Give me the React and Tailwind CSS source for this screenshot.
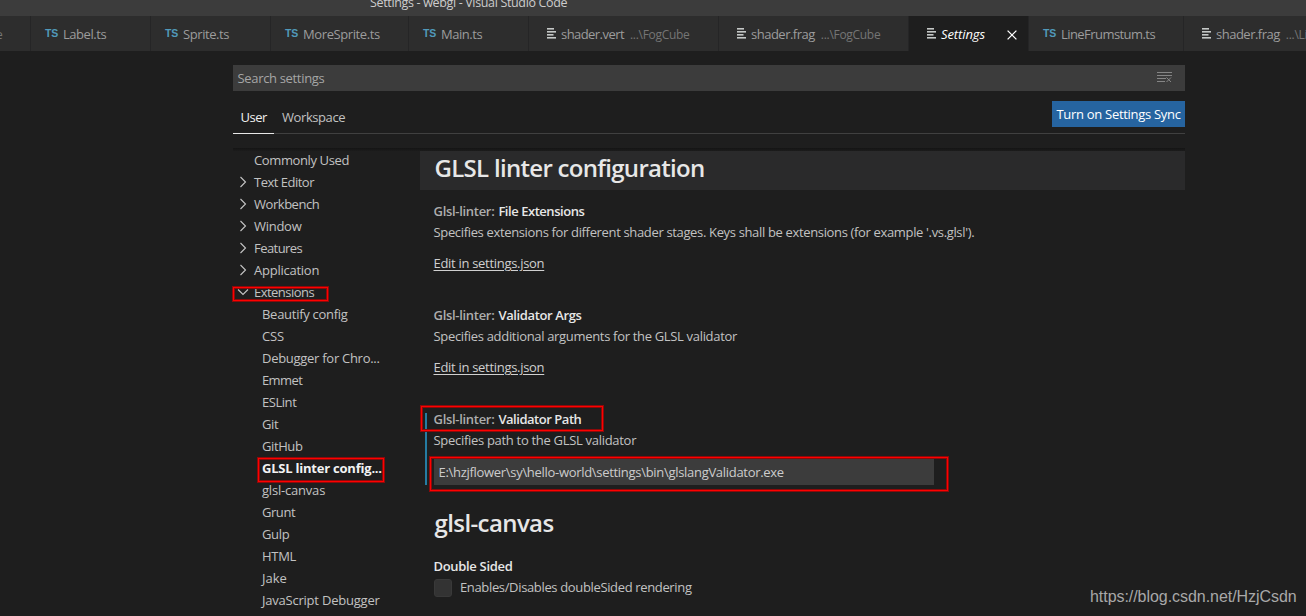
import React from 'react';

const FONT = "font-['Open_Sans','Noto_Sans',sans-serif]";

function FileIcon({ className = '' }) {
  return (
    <svg className={'shrink-0 ' + className} width="10" height="11" viewBox="0 0 10 11">
      <g fill="currentColor">
        <rect x="0" y="0" width="7" height="1.6" />
        <rect x="0" y="3" width="9" height="1.6" />
        <rect x="0" y="6" width="6.5" height="1.6" />
        <rect x="0" y="9" width="9" height="1.6" />
      </g>
    </svg>
  );
}

function TsTab({ name, width, track }) {
  return (
    <div className={'flex h-full shrink-0 items-center border-r border-[#252526] bg-[#2d2d2d] pt-[2px] pl-[14px] ' + width}>
      <span className="relative -top-px w-[18px] font-['Liberation_Sans',Arial,sans-serif] text-[10.5px] leading-none font-bold tracking-[-0.2px] text-[#519aba]">TS</span>
      <span className={'text-[#9c9c9c] ' + track}>{name}</span>
    </div>
  );
}

function FileTab({ name, path, width, track }) {
  return (
    <div className={'flex h-full shrink-0 items-center overflow-hidden border-r border-[#252526] bg-[#2d2d2d] pt-[2px] pl-[18px] ' + width}>
      <FileIcon className="relative -top-px mr-[4px] text-[#c5c8c7]" />
      <span className={'text-[#9c9c9c] ' + track}>{name}</span>
      <span className="ml-[6px] text-[12px] tracking-[-0.3px] text-[#757575]">{path}</span>
    </div>
  );
}

function Chevron({ open }) {
  return (
    <svg className="shrink-0" width="12" height="12" viewBox="0 0 12 12" fill="none" stroke="#c5c5c5" strokeWidth="1.1">
      <path d={open ? 'M1 3.5 6 8.5 11 3.5' : 'M3.5 1 8.5 6 3.5 11'} />
    </svg>
  );
}

const groups = [
  ['Text Editor', 'tracking-[-0.5px]'],
  ['Workbench', 'tracking-[-0.46px]'],
  ['Window', 'tracking-[-0.28px]'],
  ['Features', 'tracking-[-0.56px]'],
  ['Application', 'tracking-[-0.25px]'],
];

const extensions = [
  ['Beautify config', 'tracking-[-0.28px]'],
  ['CSS', 'tracking-[-0.1px]'],
  ['Debugger for Chro...', 'tracking-[-0.28px]'],
  ['Emmet', 'tracking-[-0.6px]'],
  ['ESLint', 'tracking-[-0.45px]'],
  ['Git', 'tracking-[-0.35px]'],
  ['GitHub', 'tracking-[-0.4px]'],
  ['GLSL linter config...', 'tracking-[-0.22px]', true],
  ['glsl-canvas', 'tracking-[-0.2px]'],
  ['Grunt', 'tracking-[-0.45px]'],
  ['Gulp', 'tracking-[-0.35px]'],
  ['HTML', 'tracking-[-0.28px]'],
  ['Jake', 'tracking-[0px]'],
  ['JavaScript Debugger', 'tracking-[-0.22px]'],
];

function Highlight({ className }) {
  return (
    <div className={'pointer-events-none absolute border border-[#8c0a0a] ' + className}>
      <div className="h-full w-full border border-[#ff0000]">
        <div className="h-full w-full border border-[#8c0a0a]" />
      </div>
    </div>
  );
}

function SettingTitle({ name, track }) {
  return (
    <div className="h-[21px] shrink-0 leading-[21px] font-semibold">
      <span className="mr-[4px] tracking-[-0.3px] text-[#adadad]">Glsl-linter:</span>
      <span className={'text-[#e7e7e7] ' + track}>{name}</span>
    </div>
  );
}

function EditLink() {
  return (
    <div className="mt-[10px] h-[21px] leading-[21px]">
      <span className="tracking-[-0.3px] text-[#d0d0d0] underline underline-offset-[2px]">Edit in settings.json</span>
    </div>
  );
}

export default function App() {
  return (
    <div className={'relative flex h-[616px] w-[1306px] flex-col overflow-hidden whitespace-nowrap bg-[#1e1e1e] text-[13px] text-[#c2c2c2] ' + FONT}>
      <header className="flex h-[16px] shrink-0 items-end overflow-hidden bg-[#3c3c3c] pl-[370px]">
        <span className="h-[22px] text-[12.5px] leading-[17px] tracking-[-0.34px] text-[#cccccc]">Settings - webgl - Visual Studio Code</span>
      </header>

      <nav className="flex h-[35px] shrink-0 items-center overflow-hidden bg-[#2d2d2d]">
        <div className="flex h-full w-[31px] shrink-0 items-center border-r border-[#252526] pt-[2px] text-[#757575]">
          <span className="-ml-[4px] text-[12px]">e</span>
        </div>
        <TsTab name="Label.ts" width="w-[120px]" track="tracking-[-0.45px]" />
        <TsTab name="Sprite.ts" width="w-[120px]" track="tracking-[-0.42px]" />
        <TsTab name="MoreSprite.ts" width="w-[138px]" track="tracking-[-0.4px]" />
        <TsTab name="Main.ts" width="w-[120px]" track="tracking-[-0.45px]" />
        <FileTab name="shader.vert" path="...\FogCube" width="w-[190px]" track="tracking-[-0.56px]" />
        <FileTab name="shader.frag" path="...\FogCube" width="w-[190px]" track="tracking-[-0.5px]" />
        <div className="flex h-full w-[120px] shrink-0 items-center border-r border-[#252526] bg-[#1e1e1e] pt-[2px] pl-[18px]">
          <FileIcon className="relative -top-px mr-[4px] text-[#c5c8c7]" />
          <span className="w-[66px] tracking-[-0.1px] text-white italic">Settings</span>
          <svg width="10" height="10" viewBox="0 0 10 10" stroke="#ffffff" strokeWidth="1.3">
            <path d="M.6.6 9.4 9.4M9.4.6.6 9.4" />
          </svg>
        </div>
        <TsTab name="LineFrumstum.ts" width="w-[155px]" track="tracking-[-0.56px]" />
        <FileTab name="shader.frag" path="...\Lib" width="w-[190px]" track="tracking-[-0.5px]" />
      </nav>

      <main className="ml-[233px] flex w-[952px] flex-1 flex-col">
        <div className="mt-[14px] flex h-[26px] shrink-0 items-center justify-between bg-[#3c3c3c] pr-[13px] pl-[4.5px]">
          <span className="pt-px leading-[25px] tracking-[-0.33px] text-[#a6a6a6]">Search settings</span>
          <svg className="-mt-[2px]" width="15" height="12" viewBox="0 0 15 12" fill="none" stroke="#858585" strokeWidth="1">
            <path d="M0 1.5h15M0 4.5h15M0 7.5h9M0 10.5h8M9.5 6.5l4.5 4.5M14 6.5l-4.5 4.5" />
          </svg>
        </div>

        <div className="mt-[10px] flex h-[33px] shrink-0 items-start justify-between border-b border-[#404040]">
          <div className="flex h-[33px]">
            <span className="h-[33px] w-[41px] border-b border-[#e7e7e7] pl-[7.5px] leading-[33px] tracking-[-0.5px] text-[#f0f0f0]">User</span>
            <span className="pl-[8px] leading-[33px] tracking-[-0.42px]">Workspace</span>
          </div>
          <button className="h-[26px] w-[133px] bg-[#2664a0] pl-[4.5px] text-left leading-[26px] tracking-[-0.3px] text-white">Turn on Settings Sync</button>
        </div>

        <div className="mt-[14px] h-[3px] shrink-0 bg-linear-to-b from-[#141414] to-[#1c1c1c]" />

        <div className="-mt-[2px] flex">
          <aside className="w-[187px] shrink-0 leading-[22px]">
            <div className="h-[22px] pl-[21px] tracking-[-0.38px]">Commonly Used</div>
            {groups.map(([name, track]) => (
              <div key={name} className="flex h-[22px] items-center gap-[5px] pl-[4px]">
                <Chevron />
                <span className={track}>{name}</span>
              </div>
            ))}
            <div className="flex h-[22px] items-center gap-[5px] pl-[4px]">
              <Chevron open />
              <span className="tracking-[-0.53px]">Extensions</span>
            </div>
            {extensions.map(([name, track, selected]) => (
              <div key={name} className={'h-[22px] pl-[29px] ' + track + (selected ? ' font-bold text-[#f2f2f2]' : '')}>{name}</div>
            ))}
          </aside>

          <section className="flex-1">
            <h1 className="mt-[2px] h-[39px] bg-[#2a2a2b] pl-[14.5px] text-[24px] leading-[34px] font-semibold tracking-[-0.7px] text-[#e7e7e7]">GLSL linter configuration</h1>
            <div className="mt-[11px] h-[104px] pl-[13.5px]">
              <SettingTitle name="File Extensions" track="tracking-[-0.46px]" />
              <p className="h-[21px] leading-[21px] tracking-[-0.345px]">Specifies extensions for different shader stages. Keys shall be extensions (for example '.vs.glsl').</p>
              <EditLink />
            </div>
            <div className="h-[104px] pl-[13.5px]">
              <SettingTitle name="Validator Args" track="tracking-[-0.38px]" />
              <p className="h-[21px] leading-[21px] tracking-[-0.32px]">Specifies additional arguments for the GLSL validator</p>
              <EditLink />
            </div>
            <div className="mt-[4px] ml-[5px] flex h-[72px] flex-col border-l-2 border-[#257ca3] pl-[6.5px]">
              <div className="-mt-[4px] shrink-0">
                <SettingTitle name="Validator Path" track="tracking-[-0.47px]" />
              </div>
              <p className="h-[21px] shrink-0 leading-[21px] tracking-[-0.3px]">Specifies path to the GLSL validator</p>
              <div className="mt-[8px] ml-[0.5px] h-[26px] w-[500px] shrink-0 bg-[#3c3c3c] pl-[4.5px] leading-[26px] tracking-[-0.3px] text-[#cccccc]">E:\hzjflower\sy\hello-world\settings\bin\glslangValidator.exe</div>
            </div>
            <h2 className="mt-[20px] pl-[14.5px] text-[24px] leading-[36px] font-semibold tracking-[-0.6px] text-[#e7e7e7]">glsl-canvas</h2>
            <div className="mt-[15px] pl-[13.5px]">
              <div className="h-[21px] leading-[21px] font-semibold tracking-[-0.32px] text-[#e7e7e7]">Double Sided</div>
              <div className="flex h-[21px] items-center">
                <span className="ml-[0.5px] h-[18px] w-[18px] rounded-[3px] border border-[#393939] bg-[#333333]" />
                <span className="ml-[8px] tracking-[-0.35px]">Enables/Disables doubleSided rendering</span>
              </div>
            </div>
          </section>
        </div>
      </main>

      <Highlight className="top-[286px] left-[232px] h-[16px] w-[97px]" />
      <Highlight className="top-[457px] left-[257px] h-[26px] w-[128px]" />
      <Highlight className="top-[405px] left-[420px] h-[27px] w-[184px]" />
      <Highlight className="top-[456px] left-[429px] h-[36px] w-[520px]" />
      <div className="absolute top-[586px] left-[1090px] font-['Liberation_Sans',Arial,sans-serif] text-[16px] leading-[22px] tracking-[-0.05px] text-[#a8a8a8]">https://blog.csdn.net/HzjCsdn</div>
    </div>
  );
}
